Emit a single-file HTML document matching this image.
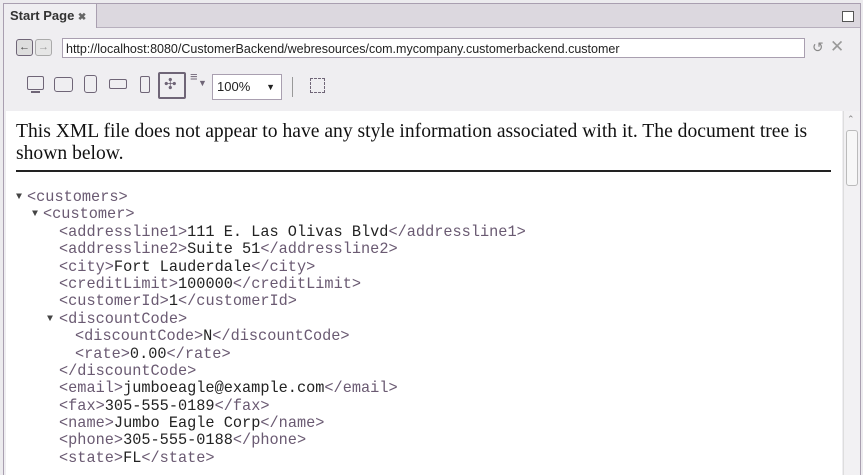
<!DOCTYPE html>
<html><head><style>
body{margin:0;width:863px;height:474px;background:#ecebee;overflow:hidden;font-family:"Liberation Sans",sans-serif;position:relative}
.frame{position:absolute;left:3px;top:3px;width:856px;height:471px;border:1px solid #a99fb0;border-bottom:none;background:#efeef1;overflow:hidden}
.tabbar{position:absolute;left:0;top:0;right:0;height:23px;background:#dcd8df;border-bottom:1px solid #b7afbd}
.tab{position:absolute;left:0;top:0;width:93px;height:24px;background:#efeef1;border-right:1px solid #a99fb0;font-size:13px;font-weight:bold;color:#333;line-height:24px;padding-left:6px;box-sizing:border-box}
.url{position:absolute;left:58px;top:34px;width:743px;height:20px;border:1px solid #a99fb0;background:#fff;font-size:12.5px;line-height:20px;padding-left:3px;box-sizing:border-box;color:#222}
.content{position:absolute;left:2px;top:107px;width:836px;height:370px;background:#fff}
.sb{position:absolute;left:839px;top:107px;width:16px;height:370px;background:#f2f1f3;border-left:1px solid #ddd}
.thumb{position:absolute;left:842px;top:126px;width:10px;height:54px;border:1px solid #bbb;border-radius:3px;background:#f7f7f7}
.msg{position:absolute;left:12px;top:117px;width:810px;font-family:"Liberation Serif",serif;font-size:19.6px;line-height:22px;color:#111}
.hr{position:absolute;left:12px;top:166px;width:815px;height:2px;background:#222}
.xml{position:absolute;left:0;top:185px;font-family:"Liberation Mono",monospace;font-size:15.25px;color:#222}
.xml div{height:17.4px;line-height:17.4px;position:relative;white-space:pre}
.t{color:#6a5a72}
.a{position:absolute;font-size:10px;color:#444;line-height:17.4px}
.ic{position:absolute;border:1.5px solid #6f6577;border-radius:2px;box-sizing:border-box}
</style></head><body>
<div class="frame">
<div class="tabbar"></div>
<div class="tab">Start Page <span style="font-size:10px;color:#666">&#10006;</span></div>
<div style="position:absolute;left:838px;top:7px;width:10px;height:9px;border:1px solid #555;background:#fff"></div>
<div style="position:absolute;left:12px;top:35px;width:15px;height:15px;border:1px solid #6f6577;border-radius:3px;background:#ddd;font-size:11px;text-align:center;line-height:15px;color:#444">&#8592;</div>
<div style="position:absolute;left:31px;top:35px;width:15px;height:15px;border:1px solid #aaa;border-radius:3px;background:#e6e6e6;font-size:11px;text-align:center;line-height:15px;color:#999">&#8594;</div>
<div class="url">http://localhost:8080/CustomerBackend/webresources/com.mycompany.customerbackend.customer</div>
<div style="position:absolute;left:808px;top:35px;font-size:14px;color:#888">&#8634;</div>
<div style="position:absolute;left:826px;top:33px;font-size:17px;color:#999">&#10005;</div>
<div class="ic" style="left:23px;top:72px;width:17px;height:14px"></div>
<div style="position:absolute;left:27px;top:87px;width:9px;height:2px;background:#6f6577"></div>
<div class="ic" style="left:50px;top:73px;width:19px;height:15px;border-radius:3px"></div>
<div class="ic" style="left:80px;top:71px;width:13px;height:18px;border-radius:3px"></div>
<div class="ic" style="left:105px;top:75px;width:18px;height:10px;border-radius:2px"></div>
<div class="ic" style="left:136px;top:72px;width:10px;height:17px;border-radius:2px"></div>
<div class="ic" style="left:154px;top:68px;width:28px;height:27px;border-width:2px"></div>
<div style="position:absolute;left:160px;top:71px;font-size:15px;color:#6f6577">&#10019;</div>
<div style="position:absolute;left:186px;top:70px;font-size:13px;color:#6f6577;line-height:5px">&#8801;<br><span style="font-size:9px;margin-left:8px">&#9660;</span></div>
<div style="position:absolute;left:208px;top:70px;width:70px;height:26px;border:1px solid #a99fb0;background:#fff;box-sizing:border-box;font-size:13px;line-height:24px;padding-left:4px;color:#222">100%<span style="position:absolute;right:6px;font-size:9px">&#9660;</span></div>
<div style="position:absolute;left:288px;top:73px;width:1px;height:20px;background:#999"></div>
<div style="position:absolute;left:306px;top:74px;width:13px;height:13px;border:1.5px dashed #6f6577"></div>
<div class="content"></div>
<div class="sb"></div><div class="thumb"></div>
<div style="position:absolute;left:843px;top:110px;font-size:9px;color:#888">&#8963;</div>
<div class="msg">This XML file does not appear to have any style information associated with it. The document tree is shown below.</div>
<div class="hr"></div>
<div class="xml"><div style="left:23px"><span class="a" style="left:-11px">&#9660;</span><span class="t">&lt;customers&gt;</span></div><div style="left:39px"><span class="a" style="left:-11px">&#9660;</span><span class="t">&lt;customer&gt;</span></div><div style="left:55px"><span class="t">&lt;addressline1&gt;</span>111 E. Las Olivas Blvd<span class="t">&lt;/addressline1&gt;</span></div><div style="left:55px"><span class="t">&lt;addressline2&gt;</span>Suite 51<span class="t">&lt;/addressline2&gt;</span></div><div style="left:55px"><span class="t">&lt;city&gt;</span>Fort Lauderdale<span class="t">&lt;/city&gt;</span></div><div style="left:55px"><span class="t">&lt;creditLimit&gt;</span>100000<span class="t">&lt;/creditLimit&gt;</span></div><div style="left:55px"><span class="t">&lt;customerId&gt;</span>1<span class="t">&lt;/customerId&gt;</span></div><div style="left:55px"><span class="a" style="left:-12px">&#9660;</span><span class="t">&lt;discountCode&gt;</span></div><div style="left:71px"><span class="t">&lt;discountCode&gt;</span>N<span class="t">&lt;/discountCode&gt;</span></div><div style="left:71px"><span class="t">&lt;rate&gt;</span>0.00<span class="t">&lt;/rate&gt;</span></div><div style="left:55px"><span class="t">&lt;/discountCode&gt;</span></div><div style="left:55px"><span class="t">&lt;email&gt;</span>jumboeagle@example.com<span class="t">&lt;/email&gt;</span></div><div style="left:55px"><span class="t">&lt;fax&gt;</span>305-555-0189<span class="t">&lt;/fax&gt;</span></div><div style="left:55px"><span class="t">&lt;name&gt;</span>Jumbo Eagle Corp<span class="t">&lt;/name&gt;</span></div><div style="left:55px"><span class="t">&lt;phone&gt;</span>305-555-0188<span class="t">&lt;/phone&gt;</span></div><div style="left:55px"><span class="t">&lt;state&gt;</span>FL<span class="t">&lt;/state&gt;</span></div></div>
</div>
</body></html>
